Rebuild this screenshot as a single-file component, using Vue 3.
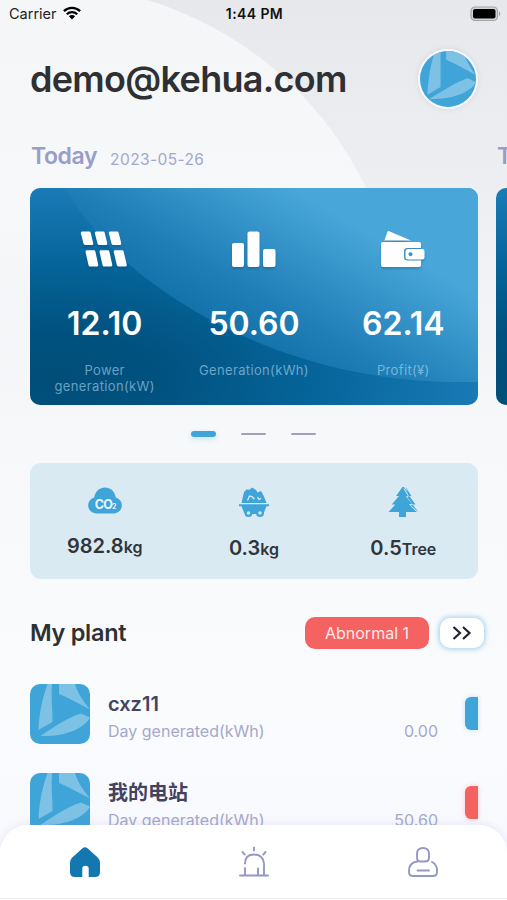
<script setup>
const days = [
  { key: 'today', title: 'Today', date: '2023-05-26' },
  { key: 'total', title: 'Total', date: '' },
]

const metrics = [
  { icon: 'panel', value: '12.10', label: 'Power generation(kW)' },
  { icon: 'bars', value: '50.60', label: 'Generation(kWh)' },
  { icon: 'wallet', value: '62.14', label: 'Profit(¥)' },
]

const plants = [
  { name: 'cxz11', value: '0.00', tone: 'ok' },
  { name: '我的电站', value: '50.60', tone: 'alert' },
]
</script>

<template>
  <div class="page">
    <svg class="backdrop" viewBox="0 0 507 900" aria-hidden="true">
      <defs>
        <linearGradient id="bgBase" x1="0" y1="0" x2="0" y2="900" gradientUnits="userSpaceOnUse">
          <stop offset="0" stop-color="#e6e8ec" />
          <stop offset=".22" stop-color="#edeff2" />
          <stop offset=".48" stop-color="#f6f8fa" />
          <stop offset=".8" stop-color="#fafbfd" />
          <stop offset="1" stop-color="#f7f8fd" />
        </linearGradient>
        <linearGradient id="bgDisc" x1="0" y1="0" x2="0" y2="430" gradientUnits="userSpaceOnUse">
          <stop offset="0" stop-color="#f4f6f8" />
          <stop offset=".5" stop-color="#f6f8fa" />
          <stop offset="1" stop-color="#f6f8fa" stop-opacity="0" />
        </linearGradient>
      </defs>
      <rect width="507" height="900" fill="url(#bgBase)" />
      <circle cx="43.6" cy="342" r="357.3" fill="url(#bgDisc)" />
    </svg>

    <main class="content">
      <div class="status">
        <div class="carrier">
          <span>Carrier</span>
          <svg width="18" height="14" viewBox="0 0 18 14">
            <g fill="none" stroke="#000" stroke-width="2.3">
              <path d="M.9 5.1a11.6 11.6 0 0 1 16.2 0" />
              <path d="M3.8 8.3a7.4 7.4 0 0 1 10.4 0" />
            </g>
            <path d="M9 13.4 5.9 10.3a4.4 4.4 0 0 1 6.2 0z" />
          </svg>
        </div>
        <span class="time">1:44 PM</span>
        <svg class="battery" width="32" height="16" viewBox="0 0 32 16">
          <rect x="1" y="1" width="26.500" height="13.500" rx="4" fill="#d3d4d6" stroke="#a3a4a7" stroke-width="1.200" />
          <rect x="3" y="3" width="22.500" height="9.500" rx="2" />
          <path d="M29 5.300c1.700.8 1.700 4.200 0 5z" fill="#a3a4a7" />
        </svg>
      </div>

      <header class="header">
        <h1>demo@kehua.com</h1>
        <div class="avatar">
          <svg viewBox="0 0 60 60">
            <rect width="60" height="60" fill="#3fa4d8" />
            <g fill="#7dc1e4">
              <path d="M16 0C11 15 8.500 31 8 47L22 38.500V0z" />
              <path d="M28 0H46C49 10 54 18 60 26C49 20 39 14 28 9.500z" />
              <path d="M10 51.500C25 42 38 34 51 29L60 33.500C53 46 32 52 10 51.500z" />
            </g>
          </svg>
        </div>
      </header>

      <section class="carousel">
        <article v-for="day in days" :key="day.key" class="slide">
          <div class="slide-head">
            <span class="slide-title">{{ day.title }}</span>
            <span class="slide-date">{{ day.date }}</span>
          </div>
          <div class="card">
            <svg class="card-bg" viewBox="0 0 448 217" preserveAspectRatio="none" aria-hidden="true">
              <defs>
                <radialGradient :id="day.key + 'Deep'" gradientUnits="userSpaceOnUse" cx="0" cy="0" r="1" gradientTransform="translate(20 190) scale(450 195)">
                  <stop offset="0" stop-color="#004d78" />
                  <stop offset=".25" stop-color="#01527f" />
                  <stop offset=".6" stop-color="#06659b" />
                  <stop offset="1" stop-color="#1b7db8" />
                </radialGradient>
                <linearGradient :id="day.key + 'Light'" gradientUnits="userSpaceOnUse" x1="-45" y1="78" x2="65" y2="-113">
                  <stop offset="0" stop-color="#05619a" />
                  <stop offset=".5" stop-color="#1f7eb6" />
                  <stop offset="1" stop-color="#48a6d9" />
                </linearGradient>
              </defs>
              <rect width="448" height="217" :fill="`url(#${day.key}Deep)`" />
              <path d="M35 0C60 42 94 78 147 112C223 161 320 194 430 194H448V0z" :fill="`url(#${day.key}Light)`" />
            </svg>
            <div v-for="m in metrics" :key="m.icon" class="metric">
              <svg class="metric-icon" width="50" height="42" viewBox="0 0 50 42" fill="#fff">
                <g v-if="m.icon === 'panel'" stroke="#fff" stroke-width="3" stroke-linejoin="round">
                  <path d="M2.300 5h6.900l2.600 10.500H5z" />
                  <path d="M16.300 5h6.900l2.600 10.500H19z" />
                  <path d="M30.300 5h6.900l2.600 10.500H33z" />
                  <path d="M7 23.700h6.900L16.800 37H10z" />
                  <path d="M21 23.700h6.900L30.800 37H24z" />
                  <path d="M35.200 23.700h6.900L45.300 37h-7z" />
                </g>
                <g v-else-if="m.icon === 'bars'">
                  <rect x="3" y="15" width="12" height="24" rx="2" />
                  <rect x="18.500" y="3.500" width="12" height="35.500" rx="2" />
                  <rect x="34" y="21" width="12.500" height="18" rx="2" />
                </g>
                <g v-else>
                  <path d="M6.300 12.500 9.500 3.800q.5-1 1.600-.6L33 12.500z" />
                  <path d="M5 14h36q2 0 2 2V20H29.500q-3.500 0-3.500 3v6.500q0 3 3.500 3H43v4.500q0 2-2 2H5q-2 0-2-2V16q0-2 2-2z" />
                  <path fill-rule="evenodd" d="M30 21h14q2.500 0 2.500 2.500v5.500q0 2.500-2.500 2.500H30q-2.500 0-2.500-2.500v-5.500Q27.500 21 30 21zm2.500 3.300a2 2 0 1 0 .01 0z" />
                </g>
              </svg>
              <strong>{{ m.value }}</strong>
              <span class="metric-label">{{ m.label }}</span>
            </div>
          </div>
        </article>
      </section>

      <div class="dots">
        <i class="dot active"></i>
        <i class="dot"></i>
        <i class="dot"></i>
      </div>

      <section class="savings">
        <div class="saving">
          <svg width="36" height="30" viewBox="0 0 36 30">
            <path d="M9 27.500a8.200 8.200 0 0 1-1.800-16.100C8.200 5 12.700 1.500 18 1.500S27.800 5 28.800 11.400A8.200 8.200 0 0 1 27 27.500z" fill="#3fa4d8" />
            <text x="7.800" y="22.500" class="co2">CO</text>
            <text x="25" y="22.500" class="co2-sub">2</text>
          </svg>
          <div class="amount"><b>982.8</b><span>kg</span></div>
        </div>
        <div class="saving lower">
          <svg width="32" height="32" viewBox="0 0 32 32">
            <g fill="#3fa4d8">
              <path d="M3.500 17 6 6 8.500 3.500l3 .3L14 1.500l4 2.500 1.500 2.500L23 5l2.500 4.500L28.500 17z" />
              <path d="M1 18.200h30v2h-2.500L26 26.500 24 28H8l-2-1.500-2.500-6.300H1z" />
              <circle cx="10.500" cy="27" r="4" />
              <circle cx="22" cy="27" r="4" />
            </g>
            <g fill="#daeaf3">
              <circle cx="10.500" cy="27" r="1.700" />
              <circle cx="22" cy="27" r="1.700" />
              <path d="M14.300 31c.7-3 3.200-3 3.900 0z" />
            </g>
            <path d="M9.500 14.500 11.500 10l2.500.7 2.500 2.500M19.500 11l1.500 2.500 2.200-1.300" fill="none" stroke="#daeaf3" stroke-width="1.300" />
          </svg>
          <div class="amount"><b>0.3</b><span>kg</span></div>
        </div>
        <div class="saving lower">
          <svg width="32" height="32" viewBox="0 0 32 32">
            <path d="M15.500 1 9 10h3l-7.300 8.500h3.600L1.500 26H12v5h7v-5h11.500l-6.800-7.500h3L20 10h3L17 1z" fill="#3fa4d8" />
            <path d="m16.800 2.500 5 8h-2.300L26 18.500h-3.300l7 7.200" fill="none" stroke="#daeaf3" stroke-width="1" />
            <path d="M18.500 1 24.500 10h-2.200l6.200 8.500h-3l6 7.500-8-7h2.400L20 10.500h2z" fill="#3fa4d8" />
          </svg>
          <div class="amount"><b>0.5</b><span>Tree</span></div>
        </div>
      </section>

      <section class="plants">
        <div class="plants-head">
          <h2>My plant</h2>
          <span class="abnormal">Abnormal 1</span>
          <button class="more" type="button" aria-label="More">
            <svg width="20" height="16" viewBox="0 0 20 16" fill="none" stroke="#22232f" stroke-width="2.200">
              <path d="m1.500 2 6.500 6-6.500 6M11 2l6.500 6L11 14" />
            </svg>
          </button>
        </div>
        <div v-for="p in plants" :key="p.name" class="plant">
          <svg class="thumb" viewBox="0 0 60 60">
            <rect width="60" height="60" fill="#3fa4d8" />
            <g fill="#7dc1e4">
              <path d="M17.500 0C12 15 9 31 8.500 46L22.500 38C22.500 25 21 12 22 0z" />
              <path d="M29 0H45C48 10 54 18 60 25.500C49 20 39 14 29 10z" />
              <path d="M10.500 52C25 42 37 34 51 29.500L60 33.500C53 46 32 53 10.500 52z" />
            </g>
          </svg>
          <div class="plant-text">
            <div class="plant-name">{{ p.name }}</div>
            <div class="plant-row">
              <span>Day generated(kWh)</span>
              <span>{{ p.value }}</span>
            </div>
          </div>
          <i class="tag" :class="p.tone"></i>
        </div>
      </section>
    </main>

    <nav class="tabs">
      <div class="tab">
        <svg width="32" height="32" viewBox="0 0 32 32">
          <path d="M13.500 2.200q2.500-2 5 0L29 11.700q2 2 2 5V26q0 5-5 5h-6.300V22.500q0-2.700-3.200-2.700t-3.200 2.700V31H6q-5 0-5-5V16.700q0-3 2-5z" fill="#1378b0" />
        </svg>
      </div>
      <div class="tab">
        <svg width="32" height="32" viewBox="0 0 32 32" fill="none" stroke="#9498c5" stroke-width="1.900" stroke-linecap="round">
          <path d="M16 1.500v3M4.500 6l2.300 2.600M27.500 6l-2.300 2.600M2 29.500h28M7 29v-7M7 17.500q0-9 9-9T26 17.500V29M20 29v-6.500" />
        </svg>
      </div>
      <div class="tab">
        <svg width="32" height="32" viewBox="0 0 32 32" fill="none" stroke="#9498c5" stroke-width="1.900" stroke-linecap="round">
          <path d="M13.500 15.500H18q4 0 4-4V8q0-6-6-6t-6 6v3.500q0 4 3.500 4M10.500 15.500Q2 16.500 2 25v1q0 4 4 4h20q4 0 4-4v-1.500q0-6-5-8.500M10.500 24.500h11.500" />
        </svg>
      </div>
    </nav>
  </div>
</template>

<style>
body {
  margin: 0;
}
</style>

<style scoped>
.page {
  position: relative;
  width: 507px;
  height: 900px;
  display: flex;
  flex-direction: column;
  overflow: hidden;
  font-family: Inter, "Noto Sans CJK SC", sans-serif;
  color: #2f3033;
}
.backdrop {
  position: absolute;
  inset: 0;
  width: 507px;
  height: 900px;
}
.content {
  position: relative;
  height: 825px;
  flex: none;
  overflow: hidden;
  display: flex;
  flex-direction: column;
}
.status {
  height: 28px;
  flex: none;
  display: grid;
  grid-template-columns: 1fr auto 1fr;
  align-items: center;
  padding: 0 5px 0 9px;
  font-size: 14px;
  line-height: 28px;
}
.carrier {
  display: flex;
  align-items: center;
  gap: 6px;
  font-size: 14.500px;
  color: #222;
}
.carrier svg {
  margin-bottom: 2px;
}
.time {
  margin-right: 2px;
  color: #111;
  font-weight: 600;
  letter-spacing: 0.4px;
}
.battery {
  justify-self: end;
  margin-bottom: 1px;
}
.header {
  height: 102px;
  flex: none;
  display: flex;
  align-items: center;
  justify-content: space-between;
  padding: 0 29px 0 30px;
  box-sizing: border-box;
}
h1 {
  margin: 0;
  font-size: 36px;
  line-height: 44px;
  font-weight: 600;
  letter-spacing: -0.7px;
}
.avatar {
  width: 56px;
  height: 56px;
  border: 2px solid #f6fafd;
  border-radius: 50%;
  overflow: hidden;
  box-shadow: 0 0 5px rgba(150, 160, 180, 0.25);
}
.avatar svg {
  display: block;
  width: 56px;
  height: 56px;
}
.carousel {
  display: flex;
  flex: none;
  gap: 18px;
  padding-left: 30px;
  height: 275px;
}
.slide {
  width: 448px;
  flex: none;
}
.slide-head {
  height: 58px;
  display: flex;
  align-items: flex-start;
  gap: 13px;
  padding: 11px 0 0 1px;
  box-sizing: border-box;
  color: #989dc9;
}
.slide-title {
  font-size: 23px;
  line-height: 30px;
  font-weight: 600;
  letter-spacing: -0.4px;
}
.slide-date {
  padding-top: 4px;
  font-size: 15.500px;
  line-height: 30px;
  letter-spacing: 0.4px;
  color: #a3a7ce;
}
.card {
  position: relative;
  height: 217px;
  display: grid;
  grid-template-columns: repeat(3, 1fr);
  border-radius: 10px;
  overflow: hidden;
}
.card-bg {
  position: absolute;
  inset: 0;
  width: 100%;
  height: 100%;
}
.metric {
  position: relative;
  display: flex;
  flex-direction: column;
  align-items: center;
  padding-top: 40px;
}
.metric-icon {
  filter: drop-shadow(0 2px 1px rgba(0, 50, 90, 0.25));
}
.metric strong {
  margin-top: 34px;
  font-size: 32px;
  line-height: 40px;
  font-weight: 600;
  color: #fff;
}
.metric-label {
  width: 120px;
  margin-top: 18px;
  font-size: 13px;
  line-height: 16px;
  letter-spacing: 0.35px;
  text-align: center;
  color: rgba(180, 218, 243, 0.6);
}
.dots {
  height: 58px;
  flex: none;
  display: flex;
  align-items: center;
  justify-content: center;
  gap: 25px;
}
.dot {
  width: 25px;
  height: 2.500px;
  border-radius: 2px;
  background: #a39fc3;
}
.dot.active {
  height: 6px;
  border-radius: 3px;
  background: #3fa4d8;
  box-shadow: 0 2px 5px rgba(63, 164, 216, 0.25);
}
.savings {
  width: 448px;
  height: 116px;
  flex: none;
  margin-left: 30px;
  display: grid;
  grid-template-columns: repeat(3, 1fr);
  border-radius: 11px;
  background: #daeaf3;
}
.saving {
  display: flex;
  flex-direction: column;
  align-items: center;
  padding-top: 23px;
}
.saving svg {
  display: block;
}
.co2 {
  font: 700 12.500px Inter, sans-serif;
  fill: #eaf5fb;
  letter-spacing: -0.8px;
}
.co2-sub {
  font: 700 7px Inter, sans-serif;
  fill: #eaf5fb;
}
.amount {
  margin-top: 17px;
  line-height: 26px;
  font-weight: 600;
  color: #30353b;
}
.amount b {
  font-size: 20px;
  font-weight: 600;
}
.amount span {
  font-size: 16px;
}
.plants-head {
  height: 105px;
  display: flex;
  align-items: center;
  padding: 2px 23px 0 30px;
  box-sizing: border-box;
}
h2 {
  margin: 0 auto 0 0;
  padding-top: 1px;
  font-size: 23.500px;
  line-height: 30px;
  font-weight: 600;
  letter-spacing: -0.3px;
}
.abnormal {
  width: 124px;
  height: 32px;
  border-radius: 10px;
  background: #f46262;
  color: #ffe9e9;
  font-size: 16px;
  line-height: 33px;
  text-align: center;
}
.more {
  width: 44px;
  height: 30px;
  margin-left: 11px;
  padding: 0;
  border: 0;
  border-radius: 10px;
  background: #fff;
  display: flex;
  align-items: center;
  justify-content: center;
  box-shadow: 0 0 5px 1px rgba(90, 180, 220, 0.6);
}
.plant {
  height: 60px;
  margin-bottom: 28.500px;
  padding: 0 29px 0 30px;
  display: flex;
}
.thumb {
  width: 60px;
  height: 60px;
  border-radius: 10px;
  flex: none;
}
.plant-text {
  flex: 1;
  margin-left: 18px;
}
.plant-name {
  margin-top: 7px;
  font-size: 20px;
  line-height: 27px;
  font-weight: 600;
  color: #43435f;
}
.plant-row {
  display: flex;
  justify-content: space-between;
  font-size: 16px;
  line-height: 27px;
  color: #a5a8ca;
}
.tag {
  width: 13px;
  height: 33px;
  margin: 13px 0 0 27px;
  border-radius: 6px 0 0 6px;
}
.tag.ok {
  background: #3fa4d8;
  box-shadow: 0 0 5px rgba(63, 164, 216, 0.3);
}
.tag.alert {
  background: #f46262;
  box-shadow: 0 0 5px rgba(244, 98, 98, 0.3);
}
.tabs {
  position: relative;
  height: 75px;
  flex: none;
  display: grid;
  grid-template-columns: repeat(3, 1fr);
  box-sizing: border-box;
  padding-top: 21px;
  border-radius: 28px 28px 0 0;
  background: linear-gradient(#fff 73px, #ededed 73px, #ededed 74px, #fff 74px);
  box-shadow: 0 -1px 7px rgba(130, 130, 220, 0.16);
}
.tab {
  display: flex;
  justify-content: center;
}
</style>
